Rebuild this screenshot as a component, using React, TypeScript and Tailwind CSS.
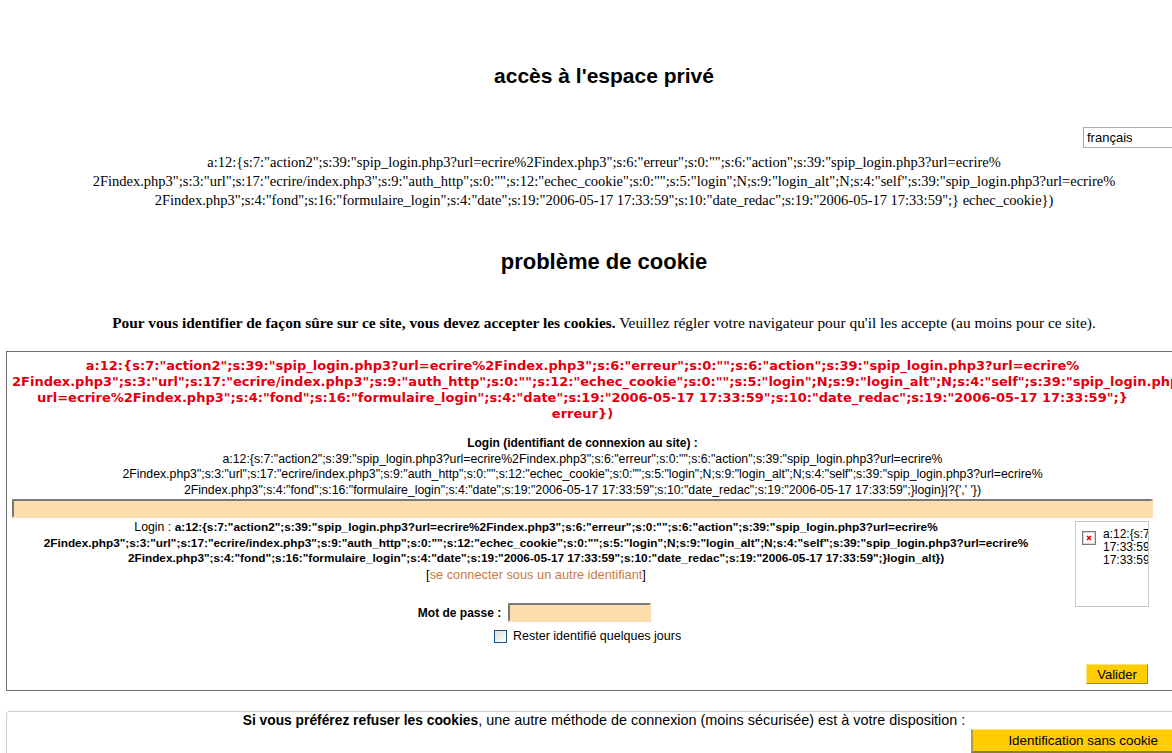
import React from 'react'

const sans = "font-['Liberation_Sans',Arial,sans-serif]"
const serif = "font-['Liberation_Serif','Times_New_Roman',serif]"
const verdana = "font-['DejaVu_Sans',Verdana,sans-serif]"

const topLines = [
  'a:12:{s:7:"action2";s:39:"spip_login.php3?url=ecrire%2Findex.php3";s:6:"erreur";s:0:"";s:6:"action";s:39:"spip_login.php3?url=ecrire%',
  '2Findex.php3";s:3:"url";s:17:"ecrire/index.php3";s:9:"auth_http";s:0:"";s:12:"echec_cookie";s:0:"";s:5:"login";N;s:9:"login_alt";N;s:4:"self";s:39:"spip_login.php3?url=ecrire%',
  '2Findex.php3";s:4:"fond";s:16:"formulaire_login";s:4:"date";s:19:"2006-05-17 17:33:59";s:10:"date_redac";s:19:"2006-05-17 17:33:59";} echec_cookie})',
]

const errorLines = [
  'a:12:{s:7:"action2";s:39:"spip_login.php3?url=ecrire%2Findex.php3";s:6:"erreur";s:0:"";s:6:"action";s:39:"spip_login.php3?url=ecrire%',
  '2Findex.php3";s:3:"url";s:17:"ecrire/index.php3";s:9:"auth_http";s:0:"";s:12:"echec_cookie";s:0:"";s:5:"login";N;s:9:"login_alt";N;s:4:"self";s:39:"spip_login.php3?',
  'url=ecrire%2Findex.php3";s:4:"fond";s:16:"formulaire_login";s:4:"date";s:19:"2006-05-17 17:33:59";s:10:"date_redac";s:19:"2006-05-17 17:33:59";}',
  'erreur})',
]

const loginHint = [
  'a:12:{s:7:"action2";s:39:"spip_login.php3?url=ecrire%2Findex.php3";s:6:"erreur";s:0:"";s:6:"action";s:39:"spip_login.php3?url=ecrire%',
  '2Findex.php3";s:3:"url";s:17:"ecrire/index.php3";s:9:"auth_http";s:0:"";s:12:"echec_cookie";s:0:"";s:5:"login";N;s:9:"login_alt";N;s:4:"self";s:39:"spip_login.php3?url=ecrire%',
  '2Findex.php3";s:4:"fond";s:16:"formulaire_login";s:4:"date";s:19:"2006-05-17 17:33:59";s:10:"date_redac";s:19:"2006-05-17 17:33:59";}login}|?{\',\' \'})',
]

const loginValue = [
  'a:12:{s:7:"action2";s:39:"spip_login.php3?url=ecrire%2Findex.php3";s:6:"erreur";s:0:"";s:6:"action";s:39:"spip_login.php3?url=ecrire%',
  '2Findex.php3";s:3:"url";s:17:"ecrire/index.php3";s:9:"auth_http";s:0:"";s:12:"echec_cookie";s:0:"";s:5:"login";N;s:9:"login_alt";N;s:4:"self";s:39:"spip_login.php3?url=ecrire%',
  '2Findex.php3";s:4:"fond";s:16:"formulaire_login";s:4:"date";s:19:"2006-05-17 17:33:59";s:10:"date_redac";s:19:"2006-05-17 17:33:59";}login_alt})',
]

function BrokenImage() {
  return (
    <svg width="14" height="14" viewBox="0 0 14 14" className="shrink-0">
      <rect x="0.5" y="0.5" width="13" height="13" fill="#fff" stroke="#7a7a7a" />
      <rect x="1.5" y="1.5" width="11" height="11" fill="none" stroke="#d8d8d8" />
      <path d="M5 5 L9 9 M9 5 L5 9" stroke="#e00000" strokeWidth="1.6" />
    </svg>
  )
}

export default function App() {
  return (
    <div className="h-[753px] w-full overflow-hidden bg-white text-black">
      <div className="w-[1208px]">
        <h1 className={`${sans} pt-[64px] text-center text-[21px] font-bold leading-[24px]`}>
          accès à l'espace privé
        </h1>

        <div className="mt-[39px] flex justify-end pr-[5px]">
          <div className={`${sans} flex h-[21px] w-[120px] items-center border border-[#a5acb2] pl-[3px] text-[13px]`}>
            français
          </div>
        </div>

        <div className={`${serif} mt-[5px] text-center text-[14.5px] leading-[19px] whitespace-nowrap`}>
          {topLines.map((l) => (
            <div key={l}>{l}</div>
          ))}
        </div>

        <h2 className={`${sans} mt-[39px] text-center text-[22px] font-bold leading-[26px]`}>
          problème de cookie
        </h2>

        <p className={`${serif} mt-[39px] text-center text-[15.4px] leading-[18px]`}>
          <b>Pour vous identifier de façon sûre sur ce site, vous devez accepter les cookies.</b>{' '}
          Veuillez régler votre navigateur pour qu'il les accepte (au moins pour ce site).
        </p>

        <div className="ml-[6px] mt-[19px] w-[1196px] border border-[#707070]">
          <div className="ml-[5px] w-[1141px] pt-[6px] pb-[6px]">
            <div className={`${verdana} text-center text-[13px] font-bold leading-[16px] whitespace-nowrap text-[#e00010]`}>
              {errorLines.map((l) => (
                <div key={l}>{l}</div>
              ))}
            </div>

            <div className={`${sans} mt-[14px] text-center leading-[15.5px] whitespace-nowrap`}>
              <div className="text-[12px] font-bold">Login (identifiant de connexion au site) :</div>
              {loginHint.map((l) => (
                <div key={l} className="text-[12.3px]">{l}</div>
              ))}
            </div>

            <div className="mt-[1px] h-[19px] w-full border-2 border-[#fddcae] border-t-[#7a7a7a] border-l-[#7a7a7a] bg-[#fddcae]" />

            <div className="flex items-start">
              <div className={`${sans} w-[1048px] pt-[2px]`}>
                <div className="text-center leading-[15.5px] whitespace-nowrap">
                  {loginValue.map((l, i) => (
                    <div key={l} className="text-[11.8px] font-bold">
                      {i === 0 && <span className="text-[12.3px] font-normal">Login : </span>}
                      {l}
                    </div>
                  ))}
                  <div className="text-[12.8px] text-[#cc7a3d]">
                    <span className="text-black">[</span>se connecter sous un autre identifiant<span className="text-black">]</span>
                  </div>
                </div>

                <div className="mt-[21px] flex items-center justify-center gap-[7px] pr-[3px]">
                  <span className="text-[12px] font-bold">Mot de passe :</span>
                  <div className="h-[19px] w-[143px] border-2 border-[#fddcae] border-t-[#7a7a7a] border-l-[#7a7a7a] bg-[#fddcae]" />
                </div>

                <div className="mt-[6px] flex items-center gap-[6px] pl-[482px] text-[12.5px] leading-[16px]">
                  <span className="h-[13px] w-[13px] border border-[#1c5180] bg-gradient-to-br from-[#dcdcd7] to-white" />
                  <span>Rester identifié quelques jours</span>
                </div>
              </div>

              <div className="ml-[15px] mt-[3px] flex h-[86px] w-[74px] gap-[7px] overflow-hidden border border-[#c8c8c8] pl-[6px] pt-[6px]">
                <div className="pt-[3px]">
                  <BrokenImage />
                </div>
                <div className={`${sans} text-[12px] leading-[13px] whitespace-nowrap`}>
                  <div>a:12:{'{'}s:7</div>
                  <div>17:33:59</div>
                  <div>17:33:59</div>
                </div>
              </div>
            </div>

            <div className="mt-[20px] flex justify-end pr-[5px]">
              <button className={`${sans} h-[20px] w-[62px] border border-[#ffe680] border-r-[#9c8a3a] border-b-[#9c8a3a] bg-[#ffcc00] text-[13px] leading-none`}>
                Valider
              </button>
            </div>
          </div>
        </div>

        <div className={`${sans} ml-[6px] mt-[20px] w-[1196px] rounded-[3px] border border-[#cfcfcf] pb-[4px]`}>
          <div className="text-center text-[14.4px] leading-[16px]">
            <b className="text-[13.8px]">Si vous préférez refuser les cookies</b>, une autre méthode de connexion (moins sécurisée) est à votre disposition :
          </div>
          <div className="flex justify-end pr-[7px]">
            <button className="h-[24px] border border-[#ffe680] border-b-2 border-l-2 border-b-[#8a7a40] border-l-[#b09a50] bg-[#ffcc00] px-[35px] text-[13.4px] leading-none">
              Identification sans cookie
            </button>
          </div>
        </div>
      </div>
    </div>
  )
}
